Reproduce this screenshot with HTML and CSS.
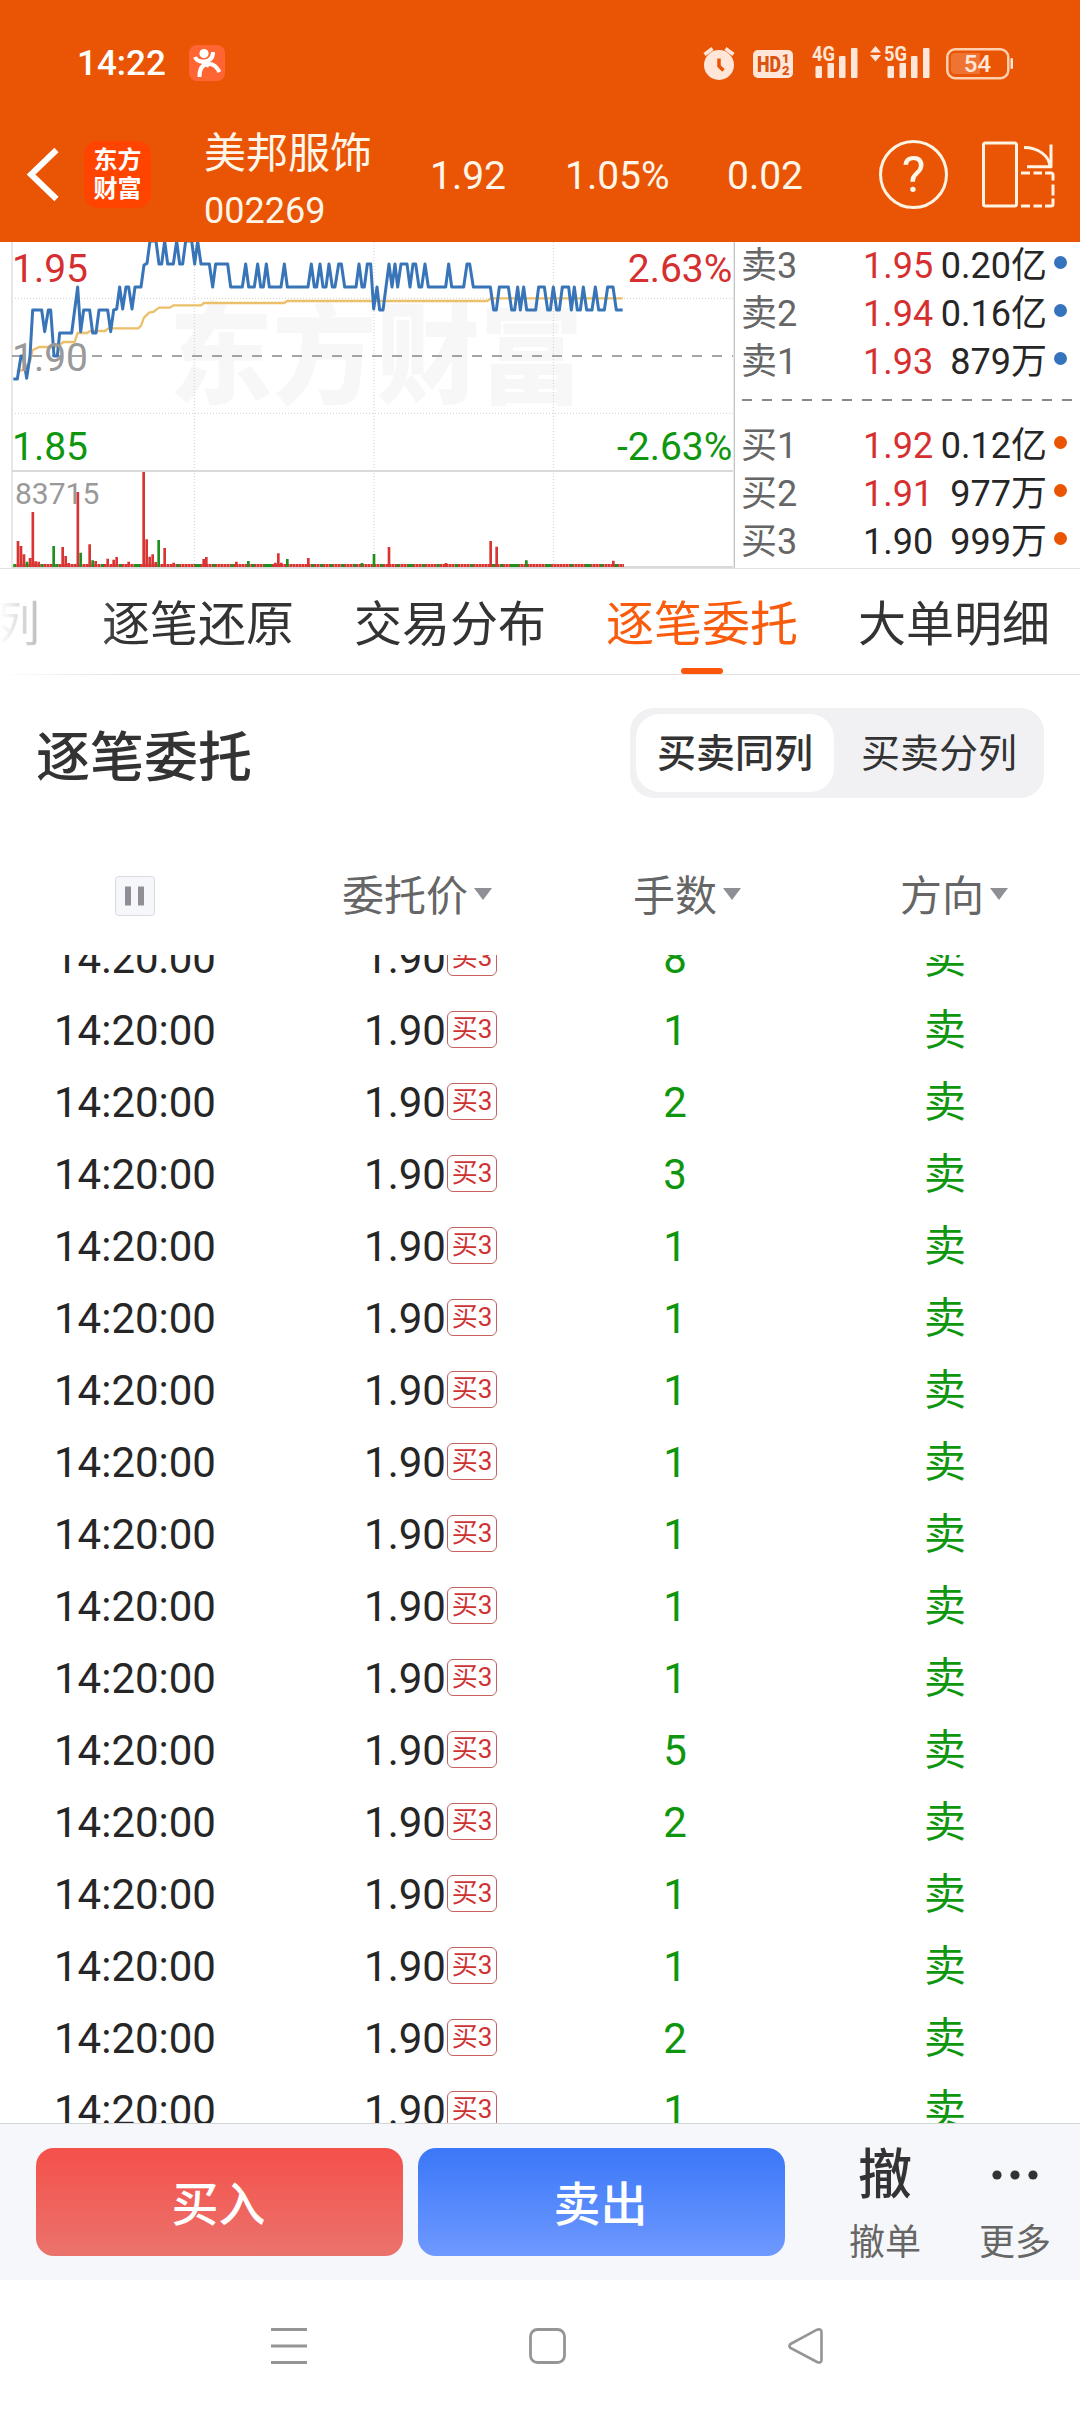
FILE: index.html
```html
<!DOCTYPE html>
<html lang="zh-CN">
<head>
    <meta charset="UTF-8">
    <meta name="viewport" content="width=device-width, initial-scale=1.0">
    <title>美邦服饰 002269</title>
    <link rel="stylesheet" href="styles.css">
</head>
<body>
    <header class="header">
        <div class="status-bar">
            <span class="clock">14:22</span>
            <svg class="app-icon" width="36" height="36" viewBox="0 0 36 36">
                <rect width="36" height="36" rx="8" fill="#ff6433"/>
                <circle cx="15" cy="8.5" r="4.6" fill="#fff"/>
                <path d="M6 12 Q8 17 15 16.5 Q24 16 24 7 M10.500 32 Q10 20 19 19 Q26 18 30.500 27 M13 17 L20 21" fill="none" stroke="#fff" stroke-width="4"/>
            </svg>
            <svg class="status-icons" width="320" height="40" viewBox="700 42 320 40">
                <g fill="#ffe6d8">
                    <circle cx="719" cy="64" r="15"/>
                    <path d="M704.500 53.500 L712.500 47.500 M725.500 47.500 L733.500 53.500" stroke="#ffe6d8" stroke-width="3.500"/>
                    <path d="M719 57.500 V65 L723.500 69.500" fill="none" stroke="#e95504" stroke-width="3.500"/>
                    <rect x="753" y="49" width="40" height="28" rx="5"/>
                    <text class="net" x="812" y="60" textLength="23" lengthAdjust="spacingAndGlyphs">4G</text>
                    <rect x="815.500" y="65" width="6.500" height="12" rx="1"/>
                    <rect x="827.500" y="62" width="6.500" height="15" rx="1"/>
                    <rect x="839" y="55" width="6.500" height="22" rx="1"/>
                    <rect x="851" y="47" width="6.500" height="30" rx="1"/>
                    <path d="M870 51.500 L875.500 45 L881 51.500 Z M870 54 L875.500 60.500 L881 54 Z"/>
                    <text class="net" x="884" y="60" textLength="23" lengthAdjust="spacingAndGlyphs">5G</text>
                    <rect x="887.500" y="65" width="6.500" height="12" rx="1"/>
                    <rect x="899.500" y="62" width="6.500" height="15" rx="1"/>
                    <rect x="911" y="55" width="6.500" height="22" rx="1"/>
                    <rect x="923" y="47" width="6.500" height="30" rx="1"/>
                    <rect x="1010.500" y="57" width="2.500" height="11" rx="1"/>
                </g>
                <g fill="#d9540f">
                    <text class="hd" x="757" y="71" textLength="24" lengthAdjust="spacingAndGlyphs">HD</text>
                    <text class="hd-sub" x="782" y="62">1</text>
                    <text class="hd-sub" x="782" y="74">2</text>
                </g>
                <rect x="947.300" y="48.300" width="61" height="29" rx="8" fill="none" stroke="#ffd0b0" stroke-width="2.500"/>
                <path d="M955 52 H980 V73 H955 Q951 73 951 69 V56 Q951 52 955 52 Z" fill="#ef7434"/>
                <text class="battery" x="977.500" y="71">54</text>
            </svg>
        </div>
        <div class="title-bar">
            <svg class="back" width="36" height="64" viewBox="26 143 36 64">
                <path d="M56.500 150 L31 174.500 L56.500 199" fill="none" stroke="#fff" stroke-width="6"/>
            </svg>
            <div class="logo"><span>东方</span><span>财富</span></div>
            <div class="stock">
                <span class="stock-name">美邦服饰</span>
                <span class="stock-code">002269</span>
            </div>
            <span class="quote quote-price">1.92</span>
            <span class="quote quote-percent">1.05%</span>
            <span class="quote">0.02</span>
            <div class="help">?</div>
            <svg class="layout-icon" width="76" height="70" viewBox="980 139.500 76 70">
                <g fill="none" stroke="#fff3e4" stroke-width="3">
                    <rect x="983.500" y="142.500" width="33" height="63" rx="2"/>
                    <path d="M1024 147 C1038 147 1049 155 1050 166 M1051 144 V167 M1027 166.300 H1052"/>
                    <path d="M1021 172.500 H1030 M1033.500 172.500 H1042 M1045 172.500 H1051 Q1053 172.500 1053 174.500 V180 M1053 184 V195 M1053 198 V203.500 Q1053 205.500 1051 205.500 H1045 M1042 205.500 H1033.500 M1030 205.500 H1021"/>
                </g>
            </svg>
        </div>
    </header>

    <section class="market">
        <!-- three drawing units per pixel, one minute is 9 units -->
        <svg class="chart" width="735" height="326" viewBox="0 21 2205 978">
            <text class="watermark" x="508" y="480" textLength="1242" lengthAdjust="spacingAndGlyphs">东方财富</text>
            <g class="grid">
                <path d="M36 190 H2199 M36 535 H2199 M583 21 V996 M1122 21 V996 M1660 21 V996"/>
            </g>
            <path d="M36 21 V999" stroke="#e2e2e2" stroke-width="5"/>
            <path d="M36 708 H2199 M36 996 H2199" stroke="#dadada" stroke-width="6"/>
            <path d="M2203 21 V999" stroke="#c4c4c4" stroke-width="4"/>
            <path d="M36 363 H2199" stroke="#888" stroke-width="5" stroke-dasharray="30 30"/>
            <polyline class="average" points="50,410 70,405 90,380 98,345 118,336 172,336 190,321 224,321 233,294 262,294 270,288 315,288 325,280 415,280 423,272 432,248 447,233 460,231 477,218 510,218 520,211 603,211 612,204 852,204 862,198 1462,198 1472,190 1868,190"/>
            <polyline class="price-line" points="40,432 52,432 63,363 70,363 80,430 90,363 98,225 125,225 134,290 145,225 152,225 162,363 172,363 179,294 215,294 224,225 233,156 242,290 251,225 269,225 278,294 288,294 297,225 323,225 332,290 341,225 350,222 359,156 368,222 378,156 386,156 396,222 405,156 423,156 432,90 441,85 450,18 468,18 477,87 485,87 494,18 503,87 520,87 530,18 539,87 548,87 557,18 575,18 584,87 593,18 603,87 628,87 638,156 647,87 683,87 692,156 727,156 737,87 746,156 763,156 773,87 782,156 790,156 799,87 808,156 843,156 853,87 862,156 924,156 934,87 943,156 950,156 960,87 969,156 978,156 987,87 997,156 1005,156 1016,87 1024,87 1034,156 1068,156 1077,87 1086,156 1093,156 1102,87 1112,87 1121,222 1131,156 1139,225 1149,225 1158,156 1167,87 1176,156 1185,87 1193,156 1203,87 1221,87 1230,156 1239,87 1247,87 1257,156 1265,156 1275,87 1285,156 1337,156 1346,87 1355,156 1391,156 1401,87 1409,87 1420,156 1471,156 1481,225 1489,225 1498,156 1525,156 1535,225 1544,225 1553,156 1561,225 1571,156 1580,225 1607,225 1616,156 1633,156 1643,225 1651,225 1660,156 1670,225 1678,225 1687,156 1706,156 1714,225 1723,156 1732,225 1741,225 1750,156 1760,225 1776,225 1786,156 1796,225 1813,225 1823,156 1839,156 1849,225 1868,225"/>
            <g class="axis">
                <text class="up" x="36" y="141">1.95</text>
                <text class="flat" x="36" y="408">1.90</text>
                <text class="down" x="36" y="675">1.85</text>
                <text class="up end" x="2197" y="141">2.63%</text>
                <text class="down end" x="2197" y="675">-2.63%</text>
                <text class="volume-max" x="45" y="807">83715</text>
            </g>
            <path class="bar-up" stroke-dasharray="8 1" d="M41 991.500 H1872" stroke-width="9"/>
            <path class="bar-down" stroke-width="9" d="M40 991.500 h8 M122 991.500 h8 M166 991.500 h9 M303 991.500 h9 M357 991.500 h9 M402 991.500 h18 M530 991.500 h9 M584 991.500 h18 M638 991.500 h9 M692 991.500 h9 M755 991.500 h9 M790 991.500 h27 M934 991.500 h9 M960 991.500 h9 M990 991.500 h9 M1024 991.500 h9 M1060 991.500 h9 M1140 991.500 h9 M1190 991.500 h9 M1222 991.500 h18 M1266 991.500 h9 M1310 991.500 h9 M1365 991.500 h9 M1410 991.500 h9 M1477 991.500 h9 M1500 991.500 h9 M1530 991.500 h27 M1636 991.500 h18 M1710 991.500 h9 M1755 991.500 h18 M1800 991.500 h9 M1845 991.500 h9"/>
            <path class="bar-up" stroke-width="8" d="M54 996 V918 M63 996 V933 M72 996 V958 M90 996 V969 M98.500 996 V831 M107 996 V979 M116 996 V980 M188 996 V936 M197 996 V963 M206 996 V984 M233.500 996 V771 M269 996 V928 M287 996 V978 M323 996 V971 M341 996 V974 M350 996 V966 M386 996 V980 M431 996 V711 M440 996 V913 M449 996 V965 M458 996 V958 M467 996 V981 M494 996 V939 M521 996 V983 M611 996 V972 M619 996 V966 M709 996 V980 M826 996 V983 M835 996 V955 M844 996 V983 M925 996 V969 M1167 996 V936 M1338 996 V984 M1472 996 V918 M1490 996 V935 M1840 996 V977"/>
            <path class="bar-down" stroke-width="8" d="M81 996 V980 M161 996 V933 M242 996 V953 M278 996 V976 M476 996 V915 M745 996 V978 M862 996 V972 M1086 996 V984 M1122 996 V957 M1579 996 V976"/>
        </svg>
        <div class="order-book">
            <div class="level"><span class="level-name">卖3</span><span class="level-price up">1.95</span><span class="level-volume">0.20亿</span><i class="dot dot-sell"></i></div>
            <div class="level"><span class="level-name">卖2</span><span class="level-price up">1.94</span><span class="level-volume">0.16亿</span><i class="dot dot-sell"></i></div>
            <div class="level"><span class="level-name">卖1</span><span class="level-price up">1.93</span><span class="level-volume">879万</span><i class="dot dot-sell"></i></div>
            <div class="book-divider"></div>
            <div class="level"><span class="level-name">买1</span><span class="level-price up">1.92</span><span class="level-volume">0.12亿</span><i class="dot dot-buy"></i></div>
            <div class="level"><span class="level-name">买2</span><span class="level-price up">1.91</span><span class="level-volume">977万</span><i class="dot dot-buy"></i></div>
            <div class="level"><span class="level-name">买3</span><span class="level-price">1.90</span><span class="level-volume">999万</span><i class="dot dot-buy"></i></div>
        </div>
    </section>

    <nav class="tabs">
        <span class="tab tab-clipped">列</span>
        <span class="tab">逐笔还原</span>
        <span class="tab">交易分布</span>
        <span class="tab active">逐笔委托</span>
        <span class="tab">大单明细</span>
    </nav>

    <div class="section-head">
        <h2>逐笔委托</h2>
        <div class="segmented">
            <span class="segment selected">买卖同列</span>
            <span class="segment">买卖分列</span>
        </div>
    </div>

    <div class="row list-head">
        <span><svg class="pause" width="40" height="40" viewBox="0 0 40 40">
            <rect x="0.500" y="0.500" width="39" height="39" rx="3" fill="#f6f7fa" stroke="#d9dade"/>
            <path d="M10 10.500 h6 v19 h-6 Z M23 10.500 h6 v19 h-6 Z" fill="#8f8f95"/>
        </svg></span>
        <span><b class="sort">委托价</b></span>
        <span><b class="sort">手数</b></span>
        <span><b class="sort sort-side">方向</b></span>
    </div>

    <main class="list">
        <div class="row"><span>14:20:00</span><span><b class="price">1.90<i class="tag">买3</i></b></span><span class="down">8</span><span class="down">卖</span></div>
        <div class="row"><span>14:20:00</span><span><b class="price">1.90<i class="tag">买3</i></b></span><span class="down">1</span><span class="down">卖</span></div>
        <div class="row"><span>14:20:00</span><span><b class="price">1.90<i class="tag">买3</i></b></span><span class="down">2</span><span class="down">卖</span></div>
        <div class="row"><span>14:20:00</span><span><b class="price">1.90<i class="tag">买3</i></b></span><span class="down">3</span><span class="down">卖</span></div>
        <div class="row"><span>14:20:00</span><span><b class="price">1.90<i class="tag">买3</i></b></span><span class="down">1</span><span class="down">卖</span></div>
        <div class="row"><span>14:20:00</span><span><b class="price">1.90<i class="tag">买3</i></b></span><span class="down">1</span><span class="down">卖</span></div>
        <div class="row"><span>14:20:00</span><span><b class="price">1.90<i class="tag">买3</i></b></span><span class="down">1</span><span class="down">卖</span></div>
        <div class="row"><span>14:20:00</span><span><b class="price">1.90<i class="tag">买3</i></b></span><span class="down">1</span><span class="down">卖</span></div>
        <div class="row"><span>14:20:00</span><span><b class="price">1.90<i class="tag">买3</i></b></span><span class="down">1</span><span class="down">卖</span></div>
        <div class="row"><span>14:20:00</span><span><b class="price">1.90<i class="tag">买3</i></b></span><span class="down">1</span><span class="down">卖</span></div>
        <div class="row"><span>14:20:00</span><span><b class="price">1.90<i class="tag">买3</i></b></span><span class="down">1</span><span class="down">卖</span></div>
        <div class="row"><span>14:20:00</span><span><b class="price">1.90<i class="tag">买3</i></b></span><span class="down">5</span><span class="down">卖</span></div>
        <div class="row"><span>14:20:00</span><span><b class="price">1.90<i class="tag">买3</i></b></span><span class="down">2</span><span class="down">卖</span></div>
        <div class="row"><span>14:20:00</span><span><b class="price">1.90<i class="tag">买3</i></b></span><span class="down">1</span><span class="down">卖</span></div>
        <div class="row"><span>14:20:00</span><span><b class="price">1.90<i class="tag">买3</i></b></span><span class="down">1</span><span class="down">卖</span></div>
        <div class="row"><span>14:20:00</span><span><b class="price">1.90<i class="tag">买3</i></b></span><span class="down">2</span><span class="down">卖</span></div>
        <div class="row"><span>14:20:00</span><span><b class="price">1.90<i class="tag">买3</i></b></span><span class="down">1</span><span class="down">卖</span></div>
    </main>

    <footer class="trade-bar">
        <button class="trade buy" type="button">买入</button>
        <button class="trade sell" type="button">卖出</button>
        <div class="action action-cancel">
            <span class="action-icon">撤</span>
            <span class="action-label">撤单</span>
        </div>
        <div class="action">
            <span class="action-icon">
                <svg width="48" height="54" viewBox="0 0 48 54" fill="#333">
                    <circle cx="6" cy="26" r="4.600"/>
                    <circle cx="24" cy="26" r="4.600"/>
                    <circle cx="42" cy="26" r="4.600"/>
                </svg>
            </span>
            <span class="action-label">更多</span>
        </div>
    </footer>

    <div class="system-nav">
        <svg width="36" height="40" viewBox="0 0 36 40">
            <path d="M0 3.500 H36 M0 20 H36 M0 36.500 H36" stroke="#959595" stroke-width="3.200"/>
        </svg>
        <svg width="37" height="40" viewBox="0 0 37 40">
            <rect x="1.500" y="3.500" width="34" height="33" rx="7" fill="none" stroke="#959595" stroke-width="2.800"/>
        </svg>
        <svg width="36" height="40" viewBox="0 0 36 40">
            <path d="M2.500 18 L29 3.700 Q33.500 2.500 33.500 6 V34 Q33.500 37.500 29 36 L2.500 22 Q0.500 20 2.500 18 Z" fill="none" stroke="#959595" stroke-width="2.600"/>
        </svg>
    </div>
</body>
</html>
```
FILE: styles.css
```css
* {
    box-sizing: border-box;
}

body {
    margin: 0;
    width: 1080px;
    height: 2412px;
    overflow: hidden;
    display: flex;
    flex-direction: column;
    background-color: #fff;
    color: #262626;
    font-family: Roboto, "Noto Sans CJK SC", sans-serif;
}

b, i {
    font-weight: normal;
    font-style: normal;
}

svg {
    display: block;
    flex: none;
}

.up {
    color: #d62f2f;
    fill: #d62f2f;
}

.down {
    color: #0f960f;
    fill: #0f960f;
}

/* Header */
.header {
    height: 242px;
    background-color: #e95504;
    color: #fff6ea;
}

.status-bar {
    display: flex;
    align-items: center;
    height: 107px;
    padding: 19px 60px 0 77px;
}

.clock {
    width: 112px;
    font-size: 35px;
    font-weight: 500;
    color: #fff;
}

.status-icons {
    margin-left: auto;
}

.net {
    font-size: 20px;
    font-weight: 700;
}

.hd {
    font-size: 22px;
    font-weight: 900;
}

.hd-sub {
    font-size: 13px;
    font-weight: 900;
}

.battery {
    font-size: 24px;
    font-weight: 500;
    text-anchor: middle;
    fill: #ffe6d8;
}

.title-bar {
    display: flex;
    align-items: center;
    height: 135px;
    padding-left: 26px;
}

.logo {
    display: flex;
    flex-direction: column;
    justify-content: center;
    align-items: center;
    width: 67px;
    height: 67px;
    margin-left: 22px;
    border-radius: 14px;
    background-color: #ff4400;
    color: #fff;
    font-size: 24px;
    font-weight: 700;
    line-height: 29px;
}

.stock {
    display: flex;
    flex-direction: column;
    width: 226px;
    margin-left: 53px;
    padding-top: 16px;
}

.stock-name {
    font-size: 42px;
    line-height: 56px;
}

.stock-code {
    font-size: 36px;
    line-height: 58px;
}

.quote {
    padding-top: 3px;
    font-size: 39px;
}

.quote-price {
    width: 135px;
}

.quote-percent {
    width: 162px;
}

.help {
    width: 69px;
    height: 69px;
    margin-left: auto;
    border: 3px solid #fff3e4;
    border-radius: 50%;
    font-size: 50px;
    line-height: 64px;
    text-align: center;
}

.layout-icon {
    margin: 0 24px 0 32px;
}

/* Chart and order book */
.market {
    display: flex;
    height: 327px;
    border-bottom: 1px solid #e2e2e2;
}

.grid {
    fill: none;
    stroke: #cfcfcf;
    stroke-width: 3;
    stroke-dasharray: 3 6;
}

.watermark {
    font-size: 330px;
    font-weight: 900;
    fill: #f7f7f7;
}

.average {
    fill: none;
    stroke: #ecc06a;
    stroke-width: 7;
}

.price-line {
    fill: none;
    stroke: #3874b8;
    stroke-width: 9;
    stroke-linejoin: round;
}

.axis {
    font-size: 117px;
}

.flat {
    fill: #999;
}

.end {
    text-anchor: end;
}

.volume-max {
    font-size: 90px;
    fill: #999;
}

.bar-up {
    stroke: #d93434;
}

.bar-down {
    stroke: #1f8f1f;
}

.order-book {
    flex: 1;
    padding: 0 12px 0 6px;
    overflow: hidden;
    font-size: 36px;
}

.level {
    display: flex;
    align-items: center;
    height: 48px;
    line-height: 48px;
}

.level-name {
    width: 122px;
    color: #666;
}

.level-price {
    width: 73px;
}

.level-volume {
    flex: 1;
    text-align: right;
}

.dot {
    width: 13px;
    height: 13px;
    margin: 0 1px 8px 7px;
    border-radius: 50%;
}

.dot-sell {
    background-color: #3573bd;
}

.dot-buy {
    background-color: #e95504;
}

.book-divider {
    height: 2px;
    width: 330px;
    margin: 13px 0 21px 1px;
    background: repeating-linear-gradient(90deg, #888 0 10px, transparent 10px 20px);
}

/* Tabs */
.tabs {
    display: flex;
    gap: 60px;
    height: 106px;
    border-bottom: 1px solid #e2e2e2;
    line-height: 111px;
    font-size: 48px;
    color: #333;
    white-space: nowrap;
    overflow: hidden;
    -webkit-mask-image: linear-gradient(90deg, transparent, #000 120px);
    mask-image: linear-gradient(90deg, transparent, #000 120px);
}

.tab {
    display: flex;
    flex-direction: column;
    align-items: center;
    flex: none;
    height: 106px;
}

.tab-clipped {
    width: 40px;
    margin-right: 2px;
    align-items: flex-end;
}

.active {
    color: #f95c0c;
}

.active::after {
    content: "";
    width: 42px;
    height: 6px;
    margin-top: -12px;
    border-radius: 3px;
    background-color: #fb560a;
}

/* Section title */
.section-head {
    display: flex;
    justify-content: space-between;
    align-items: center;
    height: 156px;
    padding: 0 36px;
    color: #333;
}

h2 {
    margin: 0;
    font-size: 54px;
    font-weight: 500;
}

.segmented {
    display: flex;
    width: 414px;
    height: 90px;
    padding: 6px;
    border-radius: 24px;
    background-color: #f1f1f3;
    font-size: 39px;
    line-height: 81px;
    text-align: center;
}

.segment {
    flex: 1;
    padding-left: 6px;
}

.selected {
    flex: 0 0 198px;
    padding-left: 0;
    border-radius: 24px;
    background-color: #fff;
    font-weight: 500;
}

/* Order list */
.row {
    display: grid;
    grid-template-columns: repeat(4, 270px);
    grid-template-rows: 72px;
    align-items: center;
    justify-items: center;
    height: 72px;
    font-size: 42px;
    line-height: 75px;
}

.list-head {
    grid-template-rows: 124px;
    height: 124px;
    padding-top: 2px;
    color: #666;
}

.sort,
.price {
    position: relative;
    display: block;
    padding-top: 2px;
}

.row > .down,
.row > span:first-child {
    padding-top: 2px;
}

.sort::after {
    content: "";
    position: absolute;
    left: calc(100% + 6px);
    top: 31px;
    border: 9px solid transparent;
    border-top: 12px solid #8f8f96;
    border-bottom: 0;
}

.sort-side {
    margin-right: 6px;
}

.list {
    height: 1168px;
    overflow: hidden;
}

.list .row:first-child {
    margin-top: -34px;
}

.tag {
    position: absolute;
    left: calc(100% + 1px);
    top: 20px;
    width: 50px;
    height: 37px;
    border: 1px solid #c96060;
    border-radius: 6px;
    color: #d03232;
    font-size: 26px;
    line-height: 35px;
    text-align: center;
}

/* Bottom bar */
.trade-bar {
    display: flex;
    align-items: center;
    height: 157px;
    padding-left: 36px;
    border-top: 1px solid #d4d5d7;
    background-color: #f6f7fa;
}

.trade {
    width: 367px;
    height: 108px;
    margin-right: 15px;
    padding: 0 2px 4px 0;
    border: none;
    border-radius: 18px;
    color: #fff;
    font-family: inherit;
    font-size: 47px;
    font-weight: 500;
}

.buy {
    background: linear-gradient(#f5504a, #eb736d);
}

.sell {
    background: linear-gradient(#3b77f8, #6e99ff);
}

.action {
    display: flex;
    flex-direction: column;
    align-items: center;
    width: 130px;
    padding-top: 15px;
}

.action-cancel {
    margin-left: 20px;
}

.action-icon {
    height: 54px;
    color: #333;
    font-size: 54px;
    font-weight: 500;
    line-height: 54px;
}

.action-label {
    margin-top: 13px;
    color: #666;
    font-size: 36px;
    line-height: 54px;
}

.system-nav {
    display: flex;
    align-items: center;
    gap: 222px;
    height: 132px;
    padding-left: 271px;
}
```
